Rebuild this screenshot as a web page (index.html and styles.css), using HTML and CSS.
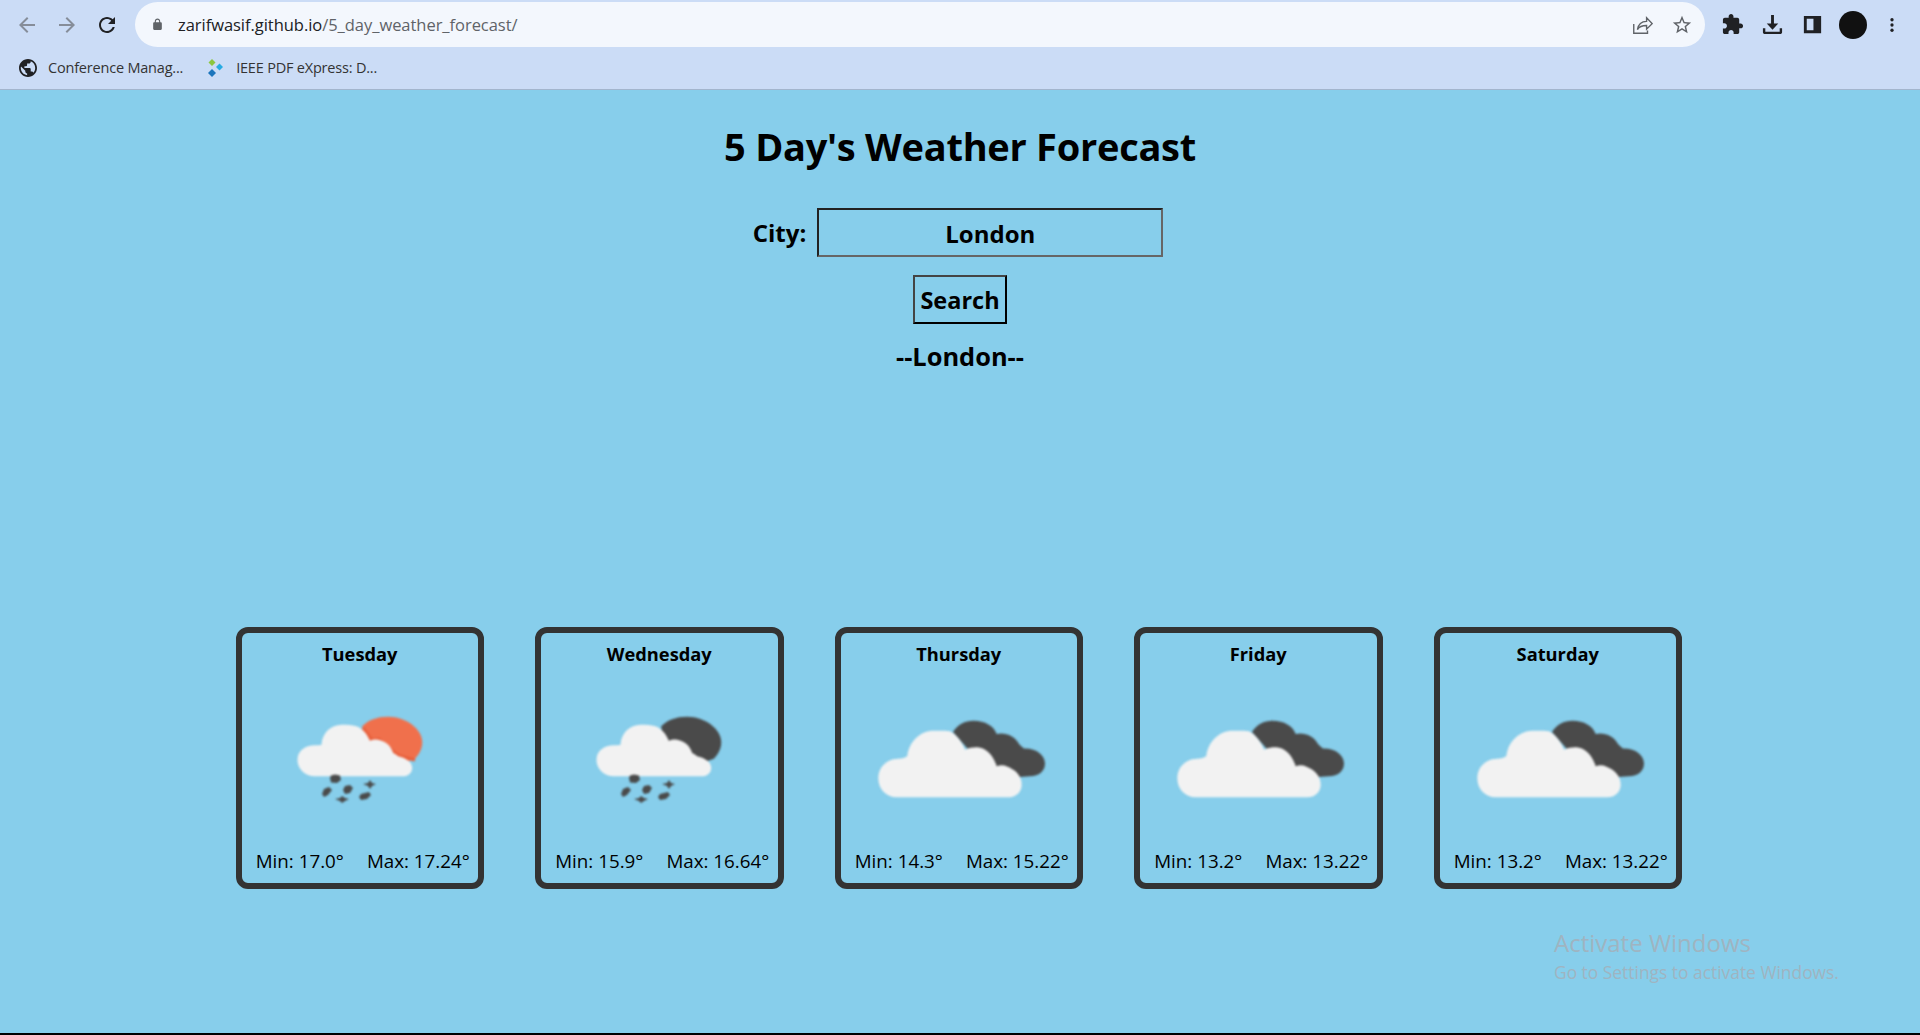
FILE: index.html
```html
<!DOCTYPE html>
<html lang="en">
<head>
<meta charset="utf-8">
<title>5 Day's Weather Forecast</title>
<link rel="stylesheet" href="styles.css">
</head>
<body>
<svg class="defs" width="0" height="0" aria-hidden="true">
  <defs>
    <symbol id="white-big" viewBox="-5 0 180 150">
      <path fill="#4a4a4a" d="M79 56C84 48 91 44.700 99.300 44.700C111 44.700 120 50 122.700 58C131 56 141 60 145 68C147 70 149 72 150 72.500C162 72 171 79 171 87.500C171 95 165 100.300 156 100.300L130 102L100 80Z"/>
      <path fill="#f2f2f2" d="M22.700 121.300C12 121.300 4.300 113 4.300 102C4.300 91 13 82.700 24.300 82.700C28 82.700 31 82 33.300 80C35 65 47 54.700 59.300 54.700C66 54.700 71 54.500 76 55.300C83 59 88 66 91 73.700C96 71.500 101 71 105 71.500C114 73 120 81 122.700 90.300C126 89 130 89 133 90.500C142 94 147.700 100 147.700 108.700C147.700 116 142 121.300 134.300 121.300Z"/>
    </symbol>
    <symbol id="rain-sun" viewBox="-5 0 180 150">
      <path fill="#f0704c" d="M87.200 50.300C93 44 102 40.700 113 40.700C132 40.700 147.200 54 147.200 65.300C147.800 72 144 79 139.800 82.700L120 90L90 70Z"/>
      <path fill="none" stroke="#e8603c" stroke-width="3" d="M88 52L97 64L104 63L120 77L125 80L140 84"/>
      <use href="#rain-cloud"/>
    </symbol>
    <symbol id="rain-moon" viewBox="-5 0 180 150">
      <path fill="#4a4a4a" d="M87.200 50.300C93 44 102 40.700 113 40.700C132 40.700 147.200 54 147.200 65.300C147.800 72 144 79 139.800 82.700L120 90L90 70Z"/>
      <use href="#rain-cloud"/>
    </symbol>
    <g id="rain-cloud">
      <path fill="#f2f2f2" d="M39.800 100.300C30 100.300 22.500 93 22.500 83.700C22.500 75 30 69.300 39.800 69.300C42 69.300 45 69 46.500 68.700C47 57 56 48.700 66.500 48.700C72 48.700 77 49 81.500 50.300C88 53 92 58 94.800 64.700C98 63.500 100 63 103.200 63.700C111 65 116 70 118.200 77C120 78 122 79 123.200 80.300C131 82 137.200 86 137.200 92C137.200 97 133 100.300 128.200 100.300Z"/>
      <path fill="#4a4a4a" d="M56 99.500L60 98.500L65 99.500L66 104L62 107L56 106.500L55 102Z"/>
      <path fill="#4a4a4a" d="M49 113L54 111L57 114L53 119L49 121L47 118Z"/>
      <path fill="#4a4a4a" d="M70 110L75 109L78 112L75 117L70 118L68 114Z"/>
      <path fill="#4a4a4a" d="M95 104L97 107L101 108L97 110L95 113L93 110L88 108L93 107Z"/>
      <path fill="#4a4a4a" d="M67 120L70 122L74 123L70 125L67 127L65 125L60 123L65 122Z"/>
      <path fill="#4a4a4a" d="M86 118L94 116L96 119L92 123L86 124L84 121Z"/>
    </g>
  </defs>
</svg>

<header class="browser">
  <div class="toolbar">
    <svg class="nav-icon faded" viewBox="0 0 24 24"><path d="M20 11H7.830l5.590-5.590L12 4l-8 8 8 8 1.410-1.410L7.830 13H20v-2z"/></svg>
    <svg class="nav-icon faded" viewBox="0 0 24 24"><path d="M12 4l-1.410 1.410L16.170 11H4v2h12.170l-5.580 5.590L12 20l8-8z"/></svg>
    <svg class="nav-icon" viewBox="0 0 24 24"><path d="M17.650 6.350C16.200 4.900 14.210 4 12 4c-4.420 0-7.990 3.580-7.990 8s3.570 8 7.990 8c3.730 0 6.840-2.550 7.730-6h-2.080c-.82 2.330-3.040 4-5.650 4-3.310 0-6-2.690-6-6s2.690-6 6-6c1.660 0 3.140.69 4.220 1.780L13 11h7V4l-2.350 2.350z"/></svg>
    <div class="omnibox">
      <svg class="lock" viewBox="0 0 24 24"><path d="M18 8h-1V6c0-2.760-2.240-5-5-5S7 3.240 7 6v2H6c-1.100 0-2 .9-2 2v10c0 1.100.9 2 2 2h12c1.100 0 2-.9 2-2V10c0-1.100-.9-2-2-2zM9 6c0-1.660 1.340-3 3-3s3 1.340 3 3v2H9V6z"/></svg>
      <span class="url">zarifwasif.github.io<span class="url-path">/5_day_weather_forecast/</span></span>
      <svg class="omni-icon share" viewBox="0 0 24 24"><path d="M3 11v10h15v-3M7 17c1-6 5-9 10-9V4l6 6.500-6 6v-4c-4 0-8 1-10 4.500z"/></svg>
      <svg class="omni-icon star" viewBox="0 0 24 24"><path d="M22 9.240l-7.190-.62L12 2 9.190 8.630 2 9.240l5.460 4.730L5.820 21 12 17.270 18.180 21l-1.630-7.030L22 9.240zM12 15.400l-3.760 2.270 1-4.280-3.320-2.880 4.380-.38L12 6.100l1.710 4.040 4.380.38-3.320 2.880 1 4.280L12 15.400z"/></svg>
    </div>
    <div class="actions">
      <svg class="act-icon" viewBox="0 0 24 24"><path d="M20.500 11H19V7c0-1.100-.9-2-2-2h-4V3.500C13 2.120 11.880 1 10.500 1S8 2.120 8 3.500V5H4c-1.100 0-1.990.9-1.990 2v3.800H3.500c1.490 0 2.700 1.210 2.700 2.700s-1.210 2.700-2.700 2.700H2V20c0 1.100.9 2 2 2h3.800v-1.500c0-1.490 1.210-2.700 2.700-2.700 1.490 0 2.700 1.210 2.700 2.700V22H17c1.100 0 2-.9 2-2v-4h1.500c1.380 0 2.500-1.120 2.500-2.500S21.880 11 20.500 11z"/></svg>
      <svg class="act-icon" viewBox="0 0 24 24"><path d="M10.500 2h3v9h4.500L12 17.500 6 11h4.500zM2 16h2.500v3.500h15V16H22v4c0 1.100-.9 2-2 2H4c-1.100 0-2-.9-2-2z"/></svg>
      <svg class="act-icon" viewBox="0 0 24 24"><path fill-rule="evenodd" d="M3 3h18v18H3zM6 6v12h7V6z"/></svg>
      <span class="avatar"></span>
      <svg class="act-icon dots" viewBox="0 0 24 24"><circle cx="12" cy="5" r="2.200"/><circle cx="12" cy="12" r="2.200"/><circle cx="12" cy="19" r="2.200"/></svg>
    </div>
  </div>
  <div class="bookmarks">
    <span class="bookmark">
      <svg class="bm-icon" viewBox="2 2 20 20"><path d="M12 2C6.480 2 2 6.480 2 12s4.480 10 10 10 10-4.480 10-10S17.520 2 12 2zm-1 17.930c-3.950-.49-7-3.850-7-7.930 0-.62.08-1.210.21-1.790L9 15v1c0 1.100.9 2 2 2v1.930zm6.900-2.540c-.26-.81-1-1.390-1.900-1.390h-1v-3c0-.55-.45-1-1-1H8v-2h2c.55 0 1-.45 1-1V7h2c1.100 0 2-.9 2-2v-.41c2.930 1.190 5 4.060 5 7.410 0 2.080-.8 3.970-2.100 5.390z"/></svg>
      Conference Manag...
    </span>
    <span class="bookmark">
      <svg class="bm-icon" viewBox="0 0 18 18">
        <path fill="#8cc63f" d="M5 0l3.500 3.500L5 7 1.500 3.500z"/>
        <path fill="#29abe2" d="M12.500 4.500L16 8l-3.500 3.500L9 8z"/>
        <path fill="#1c75bc" d="M5 10l4 4-4 4-4-4z"/>
      </svg>
      IEEE PDF eXpress: D...
    </span>
  </div>
</header>

<main class="page">
  <h1 class="title">5 Day's Weather Forecast</h1>
  <div class="city-row">
    <label class="city-label" for="city">City:</label>
    <input class="city-input" id="city" value="London">
  </div>
  <button class="search">Search</button>
  <h2 class="current-city">--London--</h2>

  <section class="cards">
    <article class="card">
      <h3 class="day">Tuesday</h3>
      <svg class="weather"><use href="#rain-sun"/></svg>
      <p class="temps"><span>Min: 17.0°</span><span>Max: 17.24°</span></p>
    </article>
    <article class="card">
      <h3 class="day">Wednesday</h3>
      <svg class="weather"><use href="#rain-moon"/></svg>
      <p class="temps"><span>Min: 15.9°</span><span>Max: 16.64°</span></p>
    </article>
    <article class="card">
      <h3 class="day">Thursday</h3>
      <svg class="weather"><use href="#white-big"/></svg>
      <p class="temps"><span>Min: 14.3°</span><span>Max: 15.22°</span></p>
    </article>
    <article class="card">
      <h3 class="day">Friday</h3>
      <svg class="weather"><use href="#white-big"/></svg>
      <p class="temps"><span>Min: 13.2°</span><span>Max: 13.22°</span></p>
    </article>
    <article class="card">
      <h3 class="day">Saturday</h3>
      <svg class="weather"><use href="#white-big"/></svg>
      <p class="temps"><span>Min: 13.2°</span><span>Max: 13.22°</span></p>
    </article>
  </section>

  <div class="watermark">
    <div class="wm-title">Activate Windows</div>
    <div class="wm-sub">Go to Settings to activate Windows.</div>
  </div>
</main>
<div class="taskbar-line"></div>
</body>
</html>
```
FILE: styles.css
```css
* { box-sizing: border-box; }
html, body { margin: 0; height: 100%; }
body {
  display: flex;
  flex-direction: column;
  height: 1035px;
  overflow: hidden;
  font-family: "Open Sans", "Noto Sans", sans-serif;
  background: #87ceeb;
  color: #000;
}
.defs { position: absolute; }

.browser {
  flex: none;
  height: 90px;
  background: #cbdcf6;
  border-bottom: 1px solid #a3b5cd;
}
.toolbar {
  display: flex;
  align-items: center;
  height: 49px;
  padding: 0 0 0 15px;
}
.nav-icon { width: 24px; height: 24px; margin-right: 16px; fill: #202124; }
.nav-icon.faded { fill: #868d99; }
.omnibox {
  display: flex;
  align-items: center;
  width: 1570px;
  height: 45px;
  padding: 0 12px 0 16px;
  background: #f3f7fd;
  border-radius: 23px;
}
.lock { width: 13px; height: 15px; fill: #5f6368; }
.url {
  flex: 1;
  margin-left: 14px;
  font-family: "Open Sans", sans-serif;
  font-size: 16.500px;
  letter-spacing: -0.04px;
  color: #202124;
}
.url-path { color: #5f6368; }
.omni-icon { width: 22px; height: 22px; fill: #5f6368; }
.share { fill: none; stroke: #5f6368; stroke-width: 1.500; margin-right: 18px; }
.actions {
  display: flex;
  align-items: center;
  margin-left: 16px;
}
.act-icon { width: 23px; height: 23px; margin-right: 17px; fill: #202124; }
.avatar {
  width: 28px;
  height: 28px;
  margin: 0 16px 0 -2px;
  border-radius: 50%;
  background: #111;
}
.dots { width: 18px; height: 18px; margin: 0; }

.bookmarks {
  display: flex;
  align-items: center;
  gap: 24px;
  height: 40px;
  padding: 0 0 3px 19px;
}
.bookmark {
  display: flex;
  align-items: center;
  gap: 11px;
  font-size: 14.500px;
  letter-spacing: -0.2px;
  color: #333;
}
.bm-icon { width: 18px; height: 18px; fill: #202124; }

.page {
  position: relative;
  flex: 1;
  display: flex;
  flex-direction: column;
  align-items: center;
  padding-top: 29px;
}
.title {
  margin: 0;
  font-size: 38px;
  line-height: 54px;
  font-weight: 700;
  letter-spacing: -0.27px;
}
.city-row {
  display: flex;
  align-items: center;
  gap: 11px;
  margin-top: 35px;
  margin-left: -4px;
}
.city-label { font-size: 24px; font-weight: 700; line-height: 34px; padding-top: 1px; }
.city-input {
  width: 346px;
  height: 49px;
  padding: 1px 0 0;
  text-align: center;
  font: 700 24px "Open Sans", sans-serif;
  color: #000;
  background: transparent;
  border: 2px solid;
  border-color: #222 #666 #666 #222;
}
.search {
  width: 94px;
  height: 49px;
  margin-top: 18px;
  padding: 0;
  font: 700 23.500px "Open Sans", sans-serif;
  color: #000;
  background: transparent;
  border: 2px solid;
  border-color: #444 #000 #000 #444;
}
.current-city {
  margin: 8px 0 0;
  font-size: 25.400px;
  line-height: 48px;
  font-weight: 700;
}

.cards {
  display: flex;
  gap: 51px;
  margin-top: 247px;
  margin-left: -2.500px;
}
.card {
  display: flex;
  flex-direction: column;
  align-items: center;
  width: 248.500px;
  height: 262px;
  border: 6px solid #333;
  border-radius: 12px;
}
.day {
  margin: 0;
  padding-top: 9px;
  font-size: 18.300px;
  line-height: 24px;
  font-weight: 700;
}
.weather {
  display: block;
  width: 180px;
  height: 150px;
  margin-top: 10px;
  filter: blur(0.8px);
}
.temps {
  display: flex;
  justify-content: center;
  gap: 23px;
  margin: 23px 0 0;
  padding-left: 6px;
  font-size: 18.800px;
  line-height: 24px;
  white-space: nowrap;
}

.watermark {
  position: absolute;
  left: 1554px;
  top: 837px;
  color: #9fb4c1;
}
.wm-title { font-size: 24px; line-height: 32px; }
.wm-sub { font-size: 17.400px; line-height: 26px; }

.taskbar-line { flex: none; height: 2px; background: #000; }
```
